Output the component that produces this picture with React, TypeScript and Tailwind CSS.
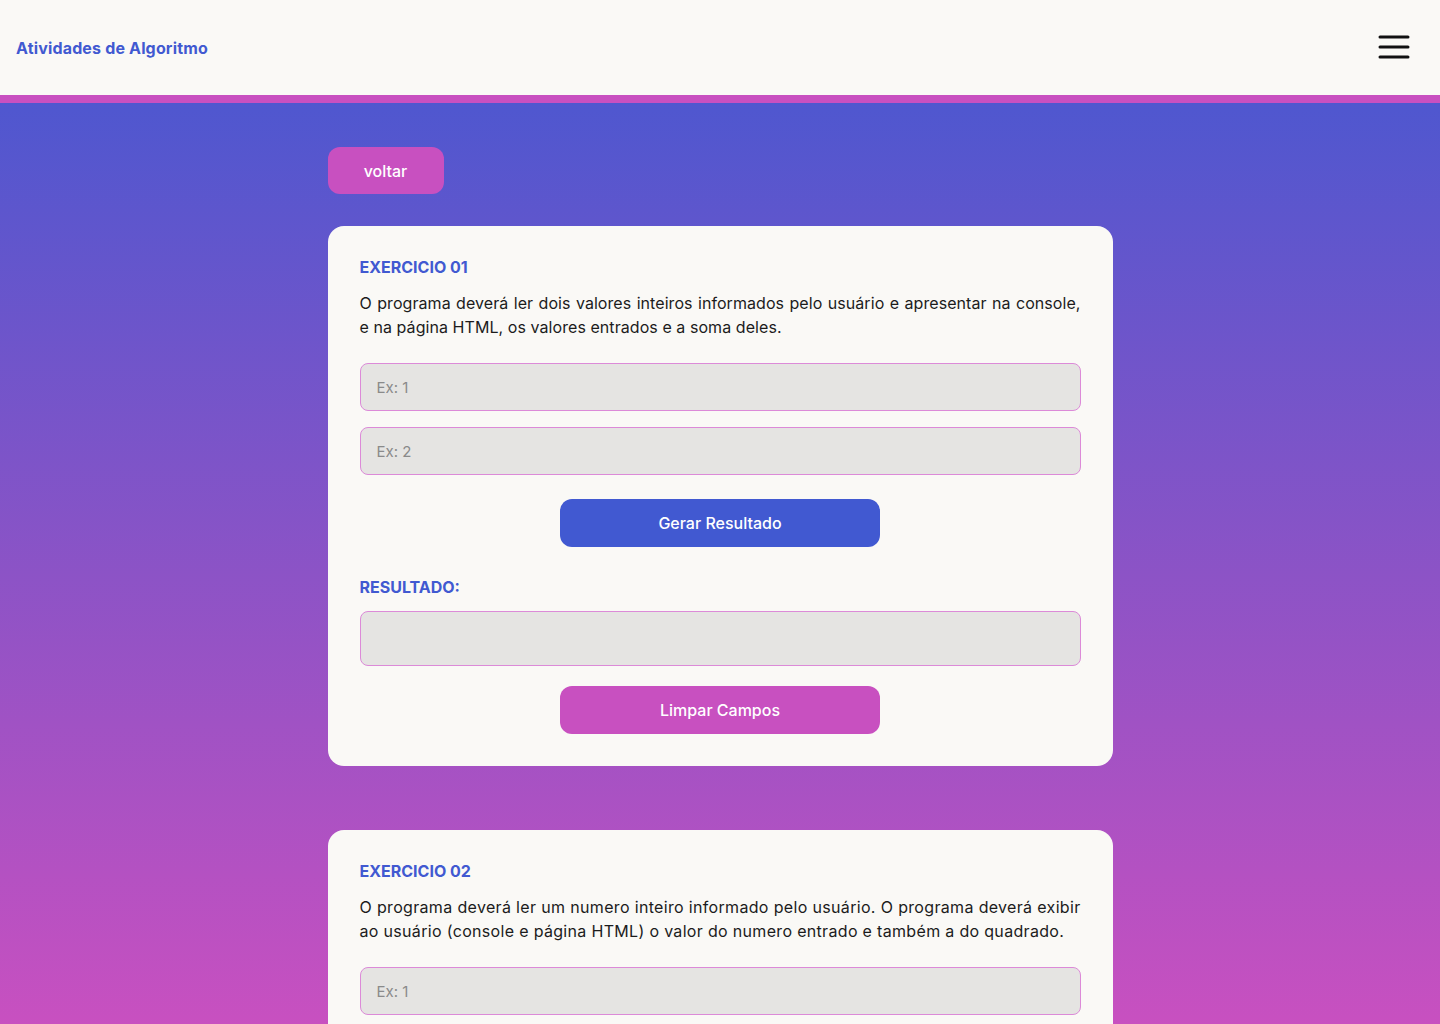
import React from "react";

const Input = ({ placeholder }: { placeholder?: string }) => (
  <input
    placeholder={placeholder}
    className="w-full h-12 rounded-lg border border-[#dc8ad8] bg-[#e5e4e2] px-4 text-[15px] text-[#333] placeholder:text-[#8a8a8a] outline-none"
  />
);

const Exercise = ({
  title,
  text,
  inputs,
  tracking,
}: {
  title: string;
  text: string;
  inputs: string[];
  tracking: string;
}) => (
  <section className="w-[785px] bg-[#faf9f6] rounded-2xl px-8 pt-[29px] pb-8">
    <h2 className="font-bold text-base leading-6 text-[#4159d1]">{title}</h2>
    <p className={`mt-3 text-base leading-6 text-[#1c1c1c] text-justify ${tracking}`}>{text}</p>
    <div className="mt-6 flex flex-col gap-4">
      {inputs.map((p) => (
        <Input key={p} placeholder={p} />
      ))}
    </div>
    <div className="mt-6 flex justify-center">
      <button className="w-80 h-12 rounded-xl bg-[#4159d1] text-white text-base font-medium">
        Gerar Resultado
      </button>
    </div>
    <h3 className="mt-7 font-bold text-base leading-6 text-[#4159d1]">RESULTADO:</h3>
    <div className="mt-3 h-[55px] rounded-lg border border-[#dc8ad8] bg-[#e5e4e2]" />
    <div className="mt-5 flex justify-center">
      <button className="w-80 h-12 rounded-xl bg-[#c850c0] text-white text-base font-medium">
        Limpar Campos
      </button>
    </div>
  </section>
);

export default function App() {
  return (
    <div className="min-h-screen font-['Inter',sans-serif]">
      <header className="h-[95px] bg-[#faf9f6] flex items-center justify-between pl-4 pr-[30px]">
        <h1 className="font-bold text-base tracking-[0.01em] text-[#4159d1]">Atividades de Algoritmo</h1>
        <svg width="32" height="26" viewBox="0 0 32 26" className="mb-[2px]">
          <g stroke="#111" strokeWidth="3" strokeLinecap="round">
            <line x1="2" y1="3" x2="30" y2="3" />
            <line x1="2" y1="13" x2="30" y2="13" />
            <line x1="2" y1="23" x2="30" y2="23" />
          </g>
        </svg>
      </header>
      <div className="h-2 bg-[#c850c0]" />
      <main className="bg-[linear-gradient(to_bottom,#4f57cf_0px,#8c53c6_470px,#c850c0_921px)] pt-11 pb-16 flex flex-col items-center">
        <div className="w-[785px]">
          <button className="w-[116px] h-[47px] rounded-xl bg-[#c850c0] text-white text-base font-medium">
            voltar
          </button>
        </div>
        <div className="mt-8 flex flex-col gap-16">
          <Exercise
            title="EXERCICIO 01"
            text="O programa deverá ler dois valores inteiros informados pelo usuário e apresentar na console, e na página HTML, os valores entrados e a soma deles."
            inputs={["Ex: 1", "Ex: 2"]}
            tracking="tracking-[0.004em]"
          />
          <Exercise
            title="EXERCICIO 02"
            text="O programa deverá ler um numero inteiro informado pelo usuário. O programa deverá exibir ao usuário (console e página HTML) o valor do numero entrado e também a do quadrado."
            inputs={["Ex: 1"]}
            tracking="tracking-[0.02em]"
          />
        </div>
      </main>
    </div>
  );
}
